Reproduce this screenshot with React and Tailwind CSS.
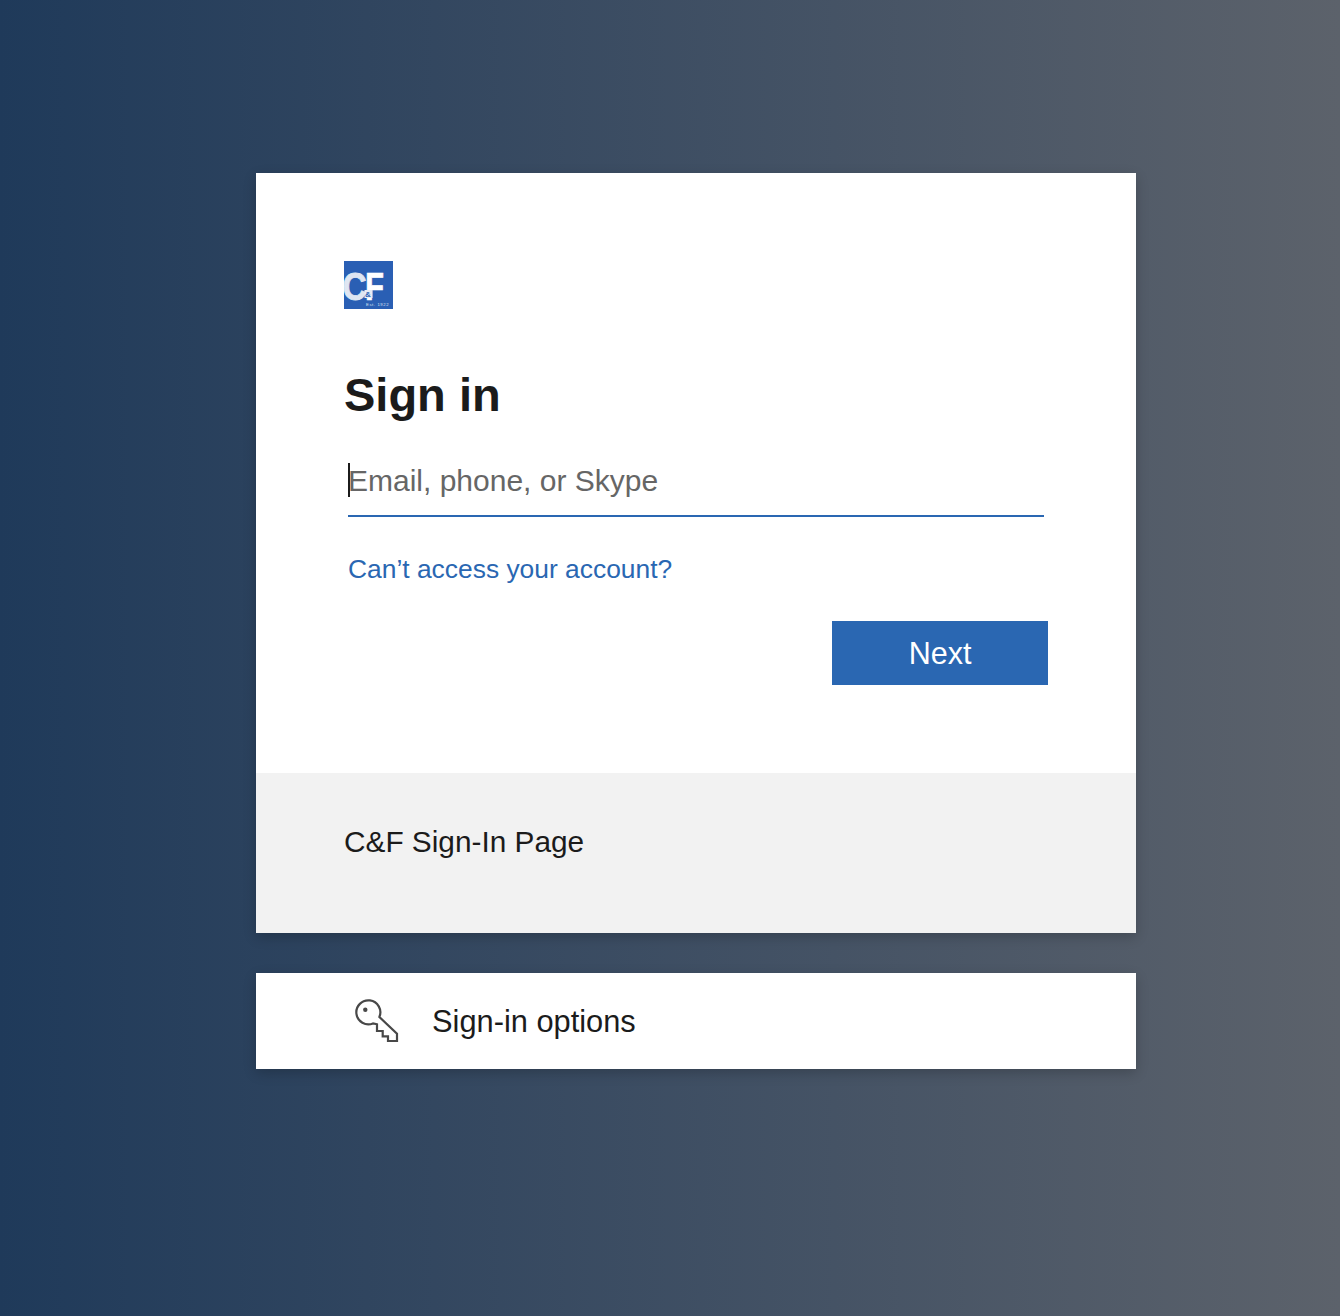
export default function App() {
  return (
    <div className="min-h-[1316px] w-full bg-gradient-to-r from-[#1f3a5a] to-[#5c626b] pt-[173px] pl-[256px] font-['Liberation_Sans',Arial,sans-serif]">
      <div className="w-[880px] bg-white shadow-[0_4px_12px_rgba(0,0,0,0.2)]">
        <div className="h-[600px] pt-[88px] pl-[88px] pr-[88px]">
          <svg width="49" height="48" viewBox="0 0 49 48" className="block">
            <rect width="49" height="48" fill="#2a5fb4" />
            <text transform="translate(-1.5 38.5) scale(0.88 1)" fontFamily="Liberation Sans" fontWeight="700" fontSize="38" fill="#dfe6f2" stroke="#dfe6f2" strokeWidth="0.8">C</text>
            <text transform="translate(20.9 38.5) scale(0.82 1)" fontFamily="Liberation Sans" fontWeight="700" fontSize="38" fill="#ffffff" stroke="#ffffff" strokeWidth="0.6">F</text>
            <rect x="20.5" y="29" width="8" height="8" fill="#e8edf6" />
            <text x="21" y="36" fontFamily="Liberation Sans" fontWeight="700" fontSize="8" fill="#2a5fb4">&amp;</text>
            <text x="22" y="44.5" fontFamily="Liberation Sans" fontSize="4.2" fill="#dfe6f2" letterSpacing="0.6">Est. 1922</text>
          </svg>
          <h1 className="mt-[56px] text-[47px] leading-[60px] font-bold text-[#1b1b1b]">Sign in</h1>
          <div className="relative ml-[4px] mt-[16px] w-[696px] border-b-2 border-[#2a67b2]">
            <input
              readOnly
              placeholder="Email, phone, or Skype"
              className="block h-[74px] w-full bg-transparent pt-[6px] text-[30px] outline-none placeholder:text-[#666666]"
            />
            <span className="absolute left-0 top-[22px] h-[34px] w-[2px] bg-[#1b1b1b]" />
          </div>
          <a className="ml-[4px] mt-[35px] block text-[26.4px] leading-[34px] text-[#2a67b2]">Can’t access your account?</a>
          <div className="mt-[35px] flex justify-end">
            <button className="h-[64px] w-[216px] bg-[#2a67b2] pt-[2px] text-[30.5px] text-white">Next</button>
          </div>
        </div>
        <div className="h-[160px] bg-[#f2f2f2] pt-[49px] pl-[88px] text-[29.8px] leading-[40px] text-[#1b1b1b]">C&amp;F Sign-In Page</div>
      </div>
      <div className="mt-[40px] flex h-[96px] w-[880px] items-center bg-white pl-[96px] shadow-[0_4px_12px_rgba(0,0,0,0.2)]">
        <svg width="48" height="48" viewBox="0 0 48 48" fill="none" stroke="#484848" strokeWidth="2.2" className="block">
          <path d="M25 27.3 L21 26.4 A12 12 0 1 1 27.4 20 L45 36.7 V44 H36 V39.3 H30.7 V34 H25 Z" />
          <circle cx="13.3" cy="12.7" r="2.2" fill="#484848" stroke="none" />
        </svg>
        <span className="ml-[32px] pt-[2px] text-[30.8px] leading-[40px] text-[#1b1b1b]">Sign-in options</span>
      </div>
    </div>
  );
}
